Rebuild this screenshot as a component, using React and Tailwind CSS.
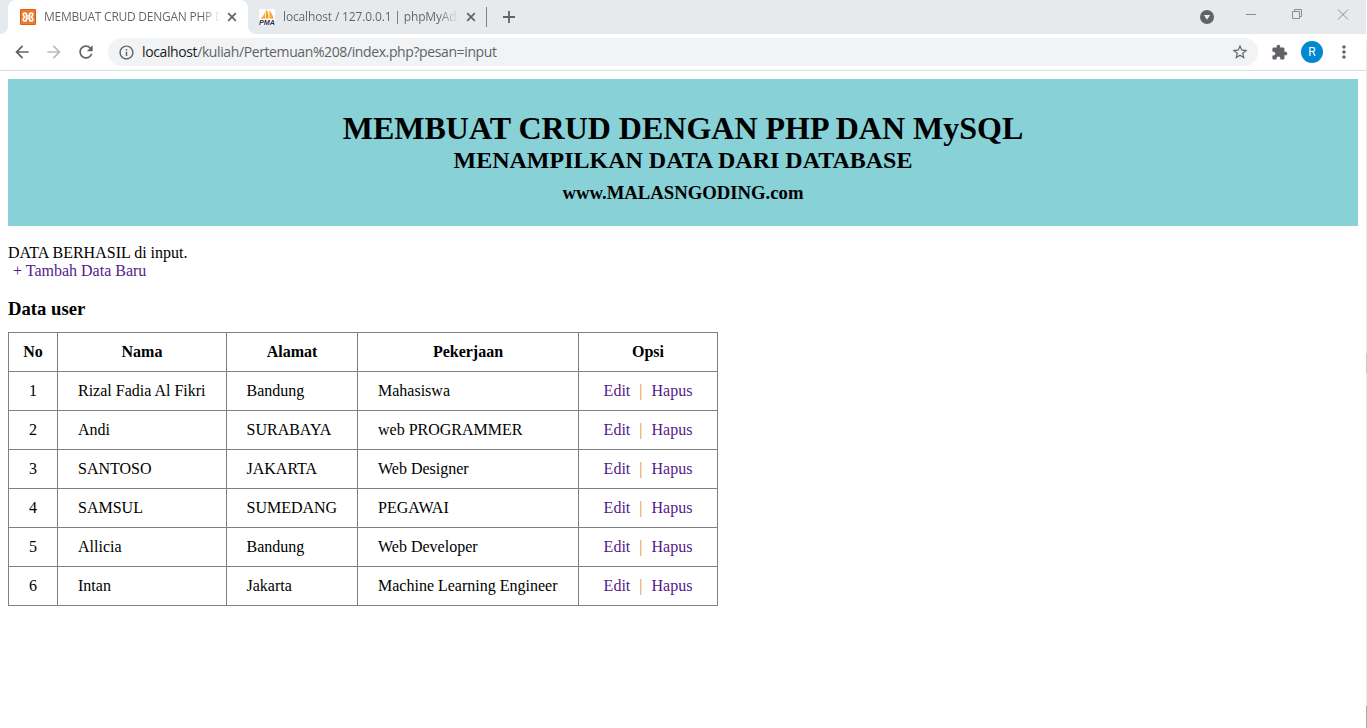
const rows = [
  ['Rizal Fadia Al Fikri', 'Bandung', 'Mahasiswa'],
  ['Andi', 'SURABAYA', 'web PROGRAMMER'],
  ['SANTOSO', 'JAKARTA', 'Web Designer'],
  ['SAMSUL', 'SUMEDANG', 'PEGAWAI'],
  ['Allicia', 'Bandung', 'Web Developer'],
  ['Intan', 'Jakarta', 'Machine Learning Engineer'],
];

function XamppIcon() {
  return (
    <svg className="size-4 shrink-0" viewBox="0 0 16 16">
      <rect width="16" height="16" rx="1" fill="#d9601a" />
      <rect x="1" y="1" width="14" height="14" fill="#ee7a2c" />
      <path
        d="M5 4C3.600 4 3 4.800 3.300 5.900 3.500 6.800 4 7.400 4.600 8 4 8.600 3.500 9.200 3.300 10.100 3 11.200 3.600 12 5 12 6.300 12 6.500 11.200 6.500 10V9H9.500V10C9.500 11.200 9.700 12 11 12 12.400 12 13 11.200 12.700 10.100 12.500 9.200 12 8.600 11.400 8 12 7.400 12.500 6.800 12.700 5.900 13 4.800 12.400 4 11 4 9.700 4 9.500 4.800 9.500 6V7H6.500V6C6.500 4.800 6.300 4 5 4Z"
        fill="none"
        stroke="#fff"
        strokeWidth="1.700"
      />
    </svg>
  );
}

function PmaIcon() {
  return (
    <svg className="size-4 shrink-0" viewBox="0 0 16 16">
      <rect width="16" height="16" fill="#fff" />
      <path d="M6.400 0.800C6.100 4 4.600 7 1.500 9.900L6 9.300Z" fill="#f9a635" />
      <path d="M7 0C9 2.500 9.700 6 9.600 9.400L6.400 9.400C7.200 6 7.400 3 7 0Z" fill="#f89c0e" />
      <path d="M9.800 1.200C12.600 3.500 14 6.500 14.600 9.900L10.300 9.300C10.800 6.500 10.600 4 9.800 1.200Z" fill="#f9a635" />
      <text x="0" y="15.800" fontFamily="Liberation Sans, sans-serif" fontSize="6.900" fontWeight="700" fontStyle="italic" textLength="16" lengthAdjust="spacingAndGlyphs" fill="#2d2752">PMA</text>
    </svg>
  );
}

function TabClose() {
  return (
    <svg className="size-4 shrink-0" viewBox="0 0 16 16" stroke="#5f6368" strokeWidth="1.700">
      <path d="M4.200 4.200l7.600 7.600M11.800 4.200l-7.600 7.600" />
    </svg>
  );
}

function MIcon({ d, color = 'fill-[#5f6368]', size = 'size-5' }) {
  return (
    <svg className={`${size} ${color} shrink-0`} viewBox="0 0 24 24">
      <path d={d} />
    </svg>
  );
}

function TabStrip() {
  return (
    <div className="flex h-[34px] w-[1366px] bg-[#e6eaed]">
      <div className="flex w-2 bg-white"><div className="w-full rounded-br-lg bg-[#e6eaed]" /></div>
      <div className="flex w-[240px] items-center rounded-t-lg bg-white pr-2 pl-3">
        <XamppIcon />
        <div className="ml-2 w-[176px] overflow-hidden whitespace-nowrap bg-linear-to-r from-[#5f6368] from-90% to-transparent bg-clip-text text-[12px] tracking-[-0.250px] text-transparent">
          MEMBUAT CRUD DENGAN PHP DAN MySQL
        </div>
        <div className="ml-1"><TabClose /></div>
      </div>
      <div className="flex bg-white">
        <div className="flex w-[238px] items-center rounded-bl-lg bg-[#e6eaed] pl-[11px]">
          <PmaIcon />
          <div className="ml-2 w-[176px] overflow-hidden whitespace-nowrap bg-linear-to-r from-[#5f6368] from-88% to-transparent bg-clip-text text-[12px] tracking-[-0.150px] text-transparent">
            localhost / 127.0.0.1 | phpMyAdmin
          </div>
          <div className="ml-1"><TabClose /></div>
        </div>
      </div>
      <div className="mt-[7px] h-5 w-px bg-[#808387]" />
      <svg className="mt-[9px] ml-[14px] size-4" viewBox="0 0 16 16" stroke="#5f6368" strokeWidth="1.800">
        <path d="M2 8h12M8 2v12" />
      </svg>
      <svg className="mt-[9px] ml-auto size-4" viewBox="0 0 16 16">
        <circle cx="8" cy="8" r="7" fill="#5f6368" />
        <path d="M4.800 6h6.400L8 10.800z" fill="#e6eaed" />
      </svg>
      <svg className="mr-[16px] ml-[31px] h-7 w-[104px]" viewBox="0 0 104 28" fill="none" stroke="#8c8f92">
        <path d="M0 14.500h10M46.500 11.500h7v7h-7zM48.500 11.500v-2h7v7h-2M92 9.500l10 10M102 9.500l-10 10" />
      </svg>
    </div>
  );
}

function Toolbar() {
  return (
    <div className="flex h-[37px] w-[1366px] items-center border-b border-[#dadce0] pl-3">
      <MIcon d="M20 11H7.830l5.590-5.590L12 4l-8 8 8 8 1.410-1.410L7.830 13H20v-2z" />
      <div className="ml-3 flex"><MIcon color="fill-[#babcbe]" d="M12 4l-1.410 1.410L16.170 11H4v2h12.170l-5.580 5.590L12 20l8-8z" /></div>
      <div className="ml-3 flex"><MIcon d="M17.650 6.350C16.200 4.900 14.210 4 12 4c-4.420 0-7.990 3.580-7.990 8s3.570 8 7.990 8c3.730 0 6.840-2.550 7.730-6h-2.080c-.82 2.330-3.040 4-5.650 4-3.310 0-6-2.690-6-6s2.690-6 6-6c1.660 0 3.140.69 4.220 1.780L13 11h7V4l-2.350 2.350z" /></div>
      <div className="ml-3 flex h-7 w-[1150px] items-center rounded-full bg-[#f1f3f4] pr-[9px] pl-[10px]">
        <MIcon size="size-[17px]" d="M11 7h2v2h-2zm0 4h2v6h-2zm1-9C6.480 2 2 6.480 2 12s4.480 10 10 10 10-4.480 10-10S17.520 2 12 2zm0 18c-4.410 0-8-3.590-8-8s3.590-8 8-8 8 3.590 8 8-3.590 8-8 8z" />
        <div className="ml-[7px] pb-px text-[14px] tracking-[-0.390px] whitespace-nowrap text-[#5f6368]">
          <span className="text-[#202124]">localhost</span>/kuliah/Pertemuan%208/index.php?pesan=input
        </div>
        <div className="ml-auto flex"><MIcon size="size-[18px]" d="M22 9.240l-7.190-.62L12 2 9.190 8.630 2 9.240l5.460 4.730L5.820 21 12 17.270 18.180 21l-1.630-7.030L22 9.240zM12 15.400l-3.760 2.270 1-4.280-3.320-2.880 4.380-.38L12 6.100l1.710 4.040 4.380.38-3.320 2.880 1 4.280L12 15.400z" /></div>
      </div>
      <div className="ml-[13px] flex"><MIcon size="size-[17px]" d="M20.500 11H19V7c0-1.100-.9-2-2-2h-4V3.500C13 2.120 11.880 1 10.500 1S8 2.120 8 3.500V5H4c-1.100 0-1.990.9-1.990 2v3.800H3.500c1.490 0 2.700 1.210 2.700 2.700s-1.210 2.700-2.700 2.700H2V20c0 1.100.9 2 2 2h3.800v-1.500c0-1.490 1.210-2.700 2.700-2.700 1.490 0 2.700 1.210 2.700 2.700V22H17c1.100 0 2-.9 2-2v-4h1.500c1.380 0 2.500-1.120 2.500-2.500S21.880 11 20.500 11z" /></div>
      <div className="ml-[13px] flex size-[22px] items-center justify-center rounded-full bg-[#0288d1] font-[Roboto,sans-serif] text-[12px] leading-none text-white">R</div>
      <div className="ml-[11px] flex"><MIcon size="size-5" d="M12 8c1.100 0 2-.9 2-2s-.9-2-2-2-2 .9-2 2 .9 2 2 2zm0 2c-1.100 0-2 .9-2 2s.9 2 2 2 2-.9 2-2-.9-2-2-2zm0 6c-1.100 0-2 .9-2 2s.9 2 2 2 2-.9 2-2-.9-2-2-2z" /></div>
    </div>
  );
}

function UserTable() {
  const cell = 'border border-[#808080] h-[39px] p-0';
  return (
    <table className="w-[710px] table-fixed border-collapse">
      <colgroup>
        <col className="w-[49px]" />
        <col className="w-[169px]" />
        <col className="w-[131px]" />
        <col className="w-[221px]" />
        <col className="w-[139px]" />
      </colgroup>
      <thead>
        <tr>
          {['No', 'Nama', 'Alamat', 'Pekerjaan', 'Opsi'].map((h) => (
            <th key={h} className={`${cell} text-center font-bold`}>{h}</th>
          ))}
        </tr>
      </thead>
      <tbody>
        {rows.map((r, i) => (
          <tr key={i}>
            <td className={`${cell} text-center`}>{i + 1}</td>
            {r.map((v, j) => (
              <td key={j} className={`${cell} ${j === 1 ? 'pl-[19.500px]' : 'pl-5'} whitespace-nowrap`}>{v}</td>
            ))}
            <td className={`${cell} text-center whitespace-nowrap text-[#551a8b]`}>
              <a>Edit</a>
              <span className="mx-[9px] text-[#e08a2c]">|</span>
              <a>Hapus</a>
            </td>
          </tr>
        ))}
      </tbody>
    </table>
  );
}

export default function App() {
  return (
    <div className="flex h-[728px] w-[1367px] overflow-hidden bg-white">
      <div className="w-[1366px] shrink-0">
        <header className="font-['Open_Sans',sans-serif]">
          <TabStrip />
          <Toolbar />
        </header>
        <main className="px-2 pt-2 font-['Liberation_Serif',serif] text-[16px] leading-[18px] text-black">
          <div className="h-[147px] bg-[#87d1d7] pt-[31px] text-center font-bold">
            <h1 className="text-[32px] leading-[37px]">MEMBUAT CRUD DENGAN PHP DAN MySQL</h1>
            <h2 className="text-[24px] leading-[27px]">MENAMPILKAN DATA DARI DATABASE</h2>
            <h3 className="mt-2 text-[18.720px] leading-[21px]">www.MALASNGODING.com</h3>
          </div>
          <p className="mt-[18px]">DATA BERHASIL di input.</p>
          <a className="ml-[5px] block text-[#551a8b]">+ Tambah Data Baru</a>
          <h3 className="mt-[18px] mb-[13px] text-[18.720px] leading-[21px] font-bold">Data user</h3>
          <UserTable />
        </main>
      </div>
      <div className="flex w-px flex-col bg-[#ebebeb]">
        <div className="h-[41px] bg-white" />
        <div className="mt-[312px] h-5 bg-[#c9c9c9]" />
        <div className="mt-auto h-[22px] bg-[#aaa8b2]" />
      </div>
    </div>
  );
}
